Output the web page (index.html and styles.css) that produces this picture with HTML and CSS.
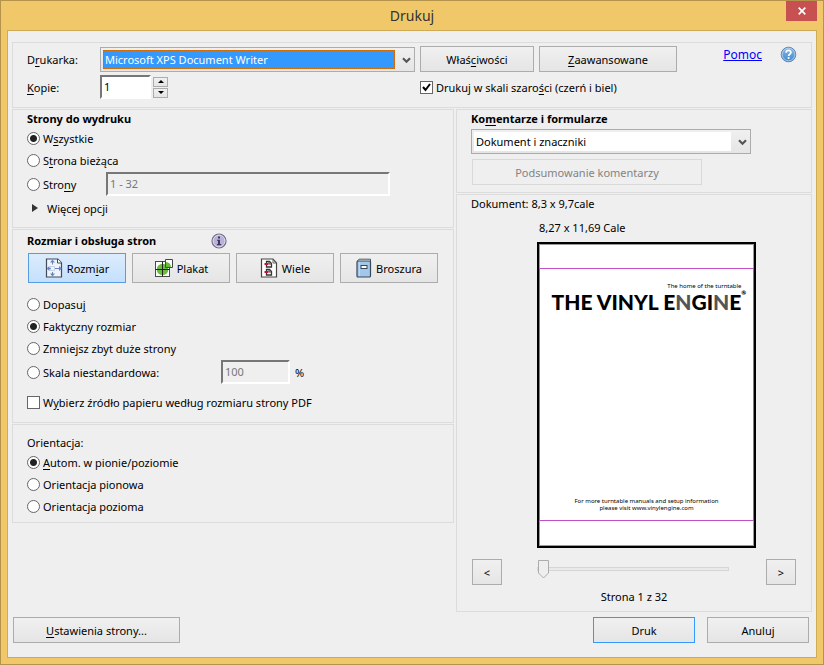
FILE: index.html
```html
<!DOCTYPE html>
<html lang="pl">

<head>
    <meta charset="UTF-8">
    <meta name="viewport" content="width=device-width, initial-scale=1.0">
    <title>Drukuj</title>
    <link rel="stylesheet" href="styles.css">
</head>

<body>
    <form class="window">
        <header class="titlebar">
            <h1>Drukuj</h1>
            <button type="button" class="close" aria-label="Zamknij">
                <svg width="8" height="8" viewBox="0 0 8 8"><path d="M.7.7l6.6 6.6M7.3.7L.7 7.3" stroke="#fff" stroke-width="1.7"/></svg>
            </button>
        </header>

        <main class="client">
            <section class="panel printer">
                <label for="printer">D<u>r</u>ukarka:</label>
                <div class="combo focused">
                    <select id="printer">
                        <option>Microsoft XPS Document Writer</option>
                    </select>
                    <svg class="arrow" width="9" height="7" viewBox="0 0 9 7"><path d="M1 1.3l3.5 3.4L8 1.3" fill="none" stroke="#555" stroke-width="2.2"/></svg>
                </div>
                <button type="button">Właś<u>c</u>iwości</button>
                <button type="button"><u>Z</u>aawansowane</button>
                <div class="help">
                    <a href="#">Pomoc</a>
                    <svg width="17" height="17" viewBox="0 0 17 17">
                        <defs>
                            <linearGradient id="helpFill" x1="0" y1="0" x2="0" y2="1">
                                <stop offset="0" stop-color="#8dbbe6"/>
                                <stop offset="1" stop-color="#3f86cb"/>
                            </linearGradient>
                        </defs>
                        <circle cx="8.5" cy="8.5" r="7.3" fill="url(#helpFill)" stroke="#5d86b0" stroke-width="1"/>
                        <circle cx="8.5" cy="8.5" r="6.3" fill="none" stroke="#b6d4f0" stroke-width=".8"/>
                        <path d="M6.2 6.7C6.2 3.7 10.9 3.8 10.9 6.5C10.9 8.1 8.6 8.2 8.6 10" fill="none" stroke="#fff" stroke-width="1.7"/>
                        <rect x="7.7" y="11.1" width="1.8" height="1.8" fill="#fff"/>
                    </svg>
                </div>

                <label for="copies"><u>K</u>opie:</label>
                <div class="copies">
                    <input type="text" id="copies" class="sunken" value="1">
                    <div class="spin">
                        <button type="button" aria-label="Więcej"><svg width="6" height="3" viewBox="0 0 6 3"><path d="M3 0l3 3H0z"/></svg></button>
                        <button type="button" aria-label="Mniej"><svg width="6" height="3" viewBox="0 0 6 3"><path d="M0 0h6L3 3z"/></svg></button>
                    </div>
                </div>
                <label class="option gray"><input type="checkbox" checked>Drukuj w skali szaro<u>ś</u>ci (czerń i biel)</label>
            </section>

            <div class="columns">
                <div class="column">
                    <section class="panel pages">
                        <h2>Strony do wydruku</h2>
                        <label class="option"><input type="radio" name="pages" checked><span>W<u>s</u>zystkie</span></label>
                        <label class="option"><input type="radio" name="pages"><span>S<u>t</u>rona bieżąca</span></label>
                        <div class="field-row">
                            <label class="option range-label"><input type="radio" name="pages"><span>Stro<u>n</u>y</span></label>
                            <input type="text" class="sunken range" value="1 - 32" aria-label="Zakres stron" disabled>
                        </div>
                        <button type="button" class="more">
                            <svg width="6" height="8" viewBox="0 0 6 8"><path d="M0 0l6 4-6 4z" fill="#333"/></svg>
                            Więcej opcji
                        </button>
                    </section>

                    <section class="panel sizing">
                        <div class="heading">
                            <h2>Rozmiar i obsługa stron</h2>
                            <svg width="16" height="16" viewBox="0 0 16 16">
                                <circle cx="8" cy="8" r="7" fill="#b9b0da" stroke="#6e6a7c" stroke-width="1.2"/>
                                <circle cx="8" cy="8" r="5.9" fill="none" stroke="#dcd7ee"/>
                                <path d="M7 3.6h2v1.8H7zM6 6.7h3v4.4h1.2v1.2H5.9v-1.2H7V7.8H6z" fill="#3f3a58"/>
                            </svg>
                        </div>
                        <div class="modes">
                            <button type="button" class="selected">
                                <svg width="18" height="20" viewBox="0 0 18 20">
                                    <path d="M1.5 1h11.3l3.7 3.7V19h-15z" fill="#eef4fc" stroke="#444b58" stroke-width="1.2"/>
                                    <path d="M12.5 1v4h4" fill="#fff" stroke="#444b58"/>
                                    <path d="M7.500 2.500v4M7.500 14v4M3 10.500h3M10 10.500h5" fill="none" stroke="#6a84bd"/>
                                    <path d="M5.500 8.500h4v4h-4z" fill="none" stroke="#9fb3d8" stroke-dasharray="1 1"/>
                                    <path d="M7.500 1.500l2.500 3H5zM7.500 18.500l2.500-3H5zM1.500 10.500l3-2.500v5zM17 10.500L14 8v5z" fill="#6a84bd"/>
                                </svg>
                                <span>Rozm<u>i</u>ar</span>
                            </button>
                            <button type="button">
                                <svg width="19" height="20" viewBox="0 0 19 20">
                                    <rect x="1.5" y="3.5" width="14" height="15" fill="#fff" stroke="#4a4a4a"/>
                                    <circle cx="8.5" cy="11.5" r="5.8" fill="#67bd3b"/>
                                    <path d="M8.5 3.5v15M1.500 11.500h14" stroke="#222"/>
                                    <path d="M11.500 1.500h7v8h-7z" fill="#fff" stroke="#444"/>
                                    <path d="M12 4a5.500 5.500 0 0 1 5 5h-5z" fill="#67bd3b"/>
                                </svg>
                                <span>Plakat</span>
                            </button>
                            <button type="button">
                                <svg width="18" height="20" viewBox="0 0 18 20">
                                    <path d="M1.5 1h11.5l3.5 4v14h-15z" fill="#fff" stroke="#444" stroke-width="1.2"/>
                                    <path d="M13 1v4h3.5" fill="none" stroke="#666"/>
                                    <path d="M6.500 3.500h3l2 2v3.500h-5zM6.500 11.500h3l2 2V17h-5z" fill="#fff" stroke="#333" stroke-width="1.3"/>
                                    <path d="M9 3.500v2.500h2.500M9 11.500V14h2.500" fill="none" stroke="#444"/>
                                    <path d="M4.500 5h4v2h-4zM4.500 13h4v2h-4z" fill="#c8102e"/>
                                </svg>
                                <span>Wiele</span>
                            </button>
                            <button type="button">
                                <svg width="16" height="20" viewBox="0 0 16 20">
                                    <path d="M1.5 3L3 1.200h11.500V18" fill="#fff" stroke="#48525e"/>
                                    <rect x="1" y="3" width="13.5" height="16" rx="1" fill="#a4c6e8" stroke="#35485b" stroke-width="1.2"/>
                                    <path d="M3.5 4v14" stroke="#bed8f0"/>
                                    <rect x="5" y="7.5" width="6" height="3" fill="#fff" stroke="#35485b"/>
                                </svg>
                                <span>Broszura</span>
                            </button>
                        </div>
                        <label class="option"><input type="radio" name="scale"><span>Dopasu<u>j</u></span></label>
                        <label class="option"><input type="radio" name="scale" checked>Faktyczny rozmiar</label>
                        <label class="option"><input type="radio" name="scale">Zmniejsz zbyt duże strony</label>
                        <div class="field-row">
                            <label class="option scale-label"><input type="radio" name="scale">Skala niestandardowa:</label>
                            <input type="text" class="sunken percent" value="100" aria-label="Skala" disabled>
                            <span>%</span>
                        </div>
                        <label class="option source"><input type="checkbox"><span>W<u>y</u>bierz źródło papieru według rozmiaru strony PDF</span></label>
                    </section>

                    <section class="panel orientation">
                        <h3>Orientacja:</h3>
                        <label class="option"><input type="radio" name="orientation" checked><span><u>A</u>utom. w pionie/poziomie</span></label>
                        <label class="option"><input type="radio" name="orientation">Orientacja pionowa</label>
                        <label class="option"><input type="radio" name="orientation">Orientacja pozioma</label>
                    </section>
                </div>

                <div class="column">
                    <section class="panel comments">
                        <h2><label for="comments">Ko<u>m</u>entarze i formularze</label></h2>
                        <div class="combo">
                            <select id="comments">
                                <option>Dokument i znaczniki</option>
                            </select>
                            <svg class="arrow" width="9" height="7" viewBox="0 0 9 7"><path d="M1 1.3l3.5 3.4L8 1.3" fill="none" stroke="#555" stroke-width="2.2"/></svg>
                        </div>
                        <button type="button" class="summary" disabled>Podsumowanie komentarzy</button>
                    </section>

                    <section class="panel preview">
                        <p>Dokument: 8,3 x 9,7cale</p>
                        <p class="paper-size">8,27 x 11,69 Cale</p>
                        <div class="paper">
                            <div class="page">
                                <div class="logo">
                                    <p class="tagline">The home of the turntable</p>
                                    <p class="brand">THE VINYL E<span>N</span>GI<span>N</span>E<sup>®</sup></p>
                                </div>
                                <p class="note">For more turntable manuals and setup information<br>please visit www.vinylengine.com</p>
                            </div>
                        </div>
                        <div class="pager">
                            <button type="button" aria-label="Poprzednia strona">&lt;</button>
                            <input type="range" min="1" max="32" value="1" aria-label="Strona">
                            <button type="button" aria-label="Następna strona">&gt;</button>
                        </div>
                        <p class="page-number">Strona 1 z 32</p>
                    </section>
                </div>
            </div>

            <footer class="actions">
                <button type="button" class="setup"><span><u>U</u>stawienia strony...</span></button>
                <button type="submit" class="default">Druk</button>
                <button type="button">Anuluj</button>
            </footer>
        </main>
    </form>
</body>

</html>
```

FILE: styles.css
```css
* {
    box-sizing: border-box;
}

body {
    margin: 0;
    font-family: "Noto Sans", sans-serif;
    font-size: 11px;
    line-height: 17px;
    color: #000;
}

h1, h2, h3, p {
    margin: 0;
    font-size: inherit;
    font-weight: normal;
}

h2 {
    font-weight: bold;
}

button, input, select {
    font: inherit;
    color: inherit;
}

svg {
    flex: none;
}

u {
    text-underline-offset: 2px;
}

.window {
    display: flex;
    flex-direction: column;
    min-height: 100vh;
    padding: 0 6px 6px;
    border: 1px solid #b5934a;
    background: #f0c869;
}

.titlebar {
    display: grid;
    grid-template-columns: 31px 1fr 31px;
    align-items: start;
    height: 29px;
}

.titlebar h1 {
    grid-column: 2;
    font-size: 14px;
    line-height: 29px;
    text-align: center;
    color: #333;
}

.titlebar .close {
    display: flex;
    align-items: center;
    justify-content: center;
    height: 20px;
    padding: 0;
    border: none;
    background: #c75050;
}

.client {
    flex: 1;
    padding: 11px 4px 13px;
    border: 1px solid #cfab58;
    background: #efefef;
}

.panel {
    border: 1px solid #dcdcdc;
    padding: 0 14px;
}

button {
    height: 26px;
    padding: 0 6px;
    border: 1px solid #acacac;
    background: linear-gradient(#f0f0f0, #e5e5e5);
}

button:disabled {
    border-color: #d9d9d9;
    background: #efefef;
    color: #838383;
}

/* drop-downs */
.combo {
    position: relative;
    height: 25px;
}

.combo select {
    appearance: none;
    width: 100%;
    height: 25px;
    padding: 2px 19px 2px 2px;
    border: 1px solid #acacac;
    border-radius: 0;
    background: linear-gradient(#fff, #fff) content-box, linear-gradient(#f0f0f0, #e5e5e5);
    text-indent: 2px;
}

.combo.focused select {
    background: linear-gradient(#3399ff, #3399ff) content-box, linear-gradient(#f0f0f0, #e5e5e5);
    color: #fff;
    outline: none;
}

.combo.focused::after {
    content: "";
    position: absolute;
    inset: 3px 20px 3px 3px;
    border: 1px dotted #cc6600;
    pointer-events: none;
}

.combo .arrow {
    position: absolute;
    top: 10px;
    right: 4px;
    pointer-events: none;
}

.sunken {
    height: 24px;
    padding: 0 2px 2px;
    border: 2px solid;
    border-color: #777 #fff #fff #777;
    background: #fff;
}

.sunken:disabled {
    background: #efefef;
    color: #777;
}

/* radios and tick boxes */
.option {
    display: flex;
    align-items: center;
    height: 22px;
    white-space: pre;
}

.option input {
    appearance: none;
    flex: none;
    width: 13px;
    height: 13px;
    margin: 0 3px 0 0;
    border: 1px solid #666;
    background: #fff;
}

.option input[type="radio"] {
    border-radius: 50%;
}

.option input[type="radio"]:checked {
    background: radial-gradient(circle, #222 3px, #fff 4px);
}

.option input[type="checkbox"]:checked {
    background: #fff url("data:image/svg+xml,%3Csvg xmlns='http://www.w3.org/2000/svg' viewBox='0 0 11 11'%3E%3Cpath d='M2 5l2.500 3L9 2' fill='none' stroke='%23000' stroke-width='2'/%3E%3C/svg%3E");
}

.field-row {
    display: flex;
    align-items: center;
    height: 26px;
}

/* printer */
.printer {
    display: grid;
    grid-template-columns: 68px 1fr 114px 138px 115px;
    column-gap: 5px;
    row-gap: 3px;
    align-items: center;
    padding-top: 3px;
    padding-bottom: 8px;
    margin-bottom: 1px;
}

.help {
    display: flex;
    justify-content: flex-end;
    align-self: start;
    gap: 18px;
}

.help a {
    font-size: 12px;
    color: #00f;
}

.copies {
    display: flex;
    align-items: center;
    gap: 2px;
}

.copies .sunken {
    width: 51px;
}

.spin {
    display: grid;
    gap: 1px;
}

.spin button {
    display: flex;
    align-items: center;
    justify-content: center;
    width: 15px;
    height: 10px;
    padding: 0;
}

.gray {
    grid-column: 3 / -1;
}

/* two columns of settings */
.columns {
    display: grid;
    grid-template-columns: 442fr 356fr;
    gap: 2px;
}

.column {
    display: flex;
    flex-direction: column;
    gap: 1px;
}

.pages {
    padding-bottom: 8px;
}

.range-label {
    width: 79px;
}

.range {
    flex: 1;
    margin-right: 49px;
}

.more {
    display: flex;
    align-items: center;
    gap: 9px;
    height: 22px;
    padding: 0 5px;
    border: none;
    background: none;
}

.sizing {
    padding-top: 2px;
    padding-bottom: 9px;
}

.heading {
    display: flex;
    align-items: center;
    justify-content: space-between;
    width: 200px;
    height: 17px;
    white-space: nowrap;
}

.modes {
    display: grid;
    grid-template-columns: repeat(4, 1fr);
    gap: 6px;
    margin: 4px 1px 10px;
}

.modes button {
    display: flex;
    align-items: center;
    justify-content: center;
    gap: 4px;
    height: 30px;
}

.modes .selected {
    border-color: #569de5;
    background: linear-gradient(#dcecfc, #c4e0fc);
}

.scale-label {
    width: 194px;
}

.percent {
    width: 69px;
    margin-right: 5px;
}

.source {
    margin-top: 6px;
}

.orientation {
    padding-top: 9px;
    padding-bottom: 5px;
}

.comments {
    padding-bottom: 7px;
}

.comments .combo {
    width: 280px;
    margin: 2px 0 5px;
}

.summary {
    display: block;
    width: 230px;
    margin-left: 1px;
}

/* preview */
.paper-size {
    margin: 7px 0 6px 68px;
}

.paper {
    width: 219px;
    height: 306px;
    margin-left: 66px;
    padding: 24px 0 25px;
    border: 2px solid #000;
    background: #fff;
    box-shadow: inset 0 0 0 1px #999;
}

.page {
    display: flex;
    flex-direction: column;
    align-items: center;
    justify-content: space-between;
    height: 100%;
    padding: 14px 0 8px;
    border: 1px solid #c050c8;
}

.logo {
    width: 190px;
}

.tagline {
    font-size: 6px;
    line-height: 7px;
    text-align: right;
}

.brand {
    font-family: "Lato", sans-serif;
    font-size: 21px;
    font-weight: 900;
    line-height: 24px;
    white-space: nowrap;
}

.brand span {
    color: #555;
}

.brand sup {
    font-size: 6px;
    line-height: 6px;
    vertical-align: top;
}

.note {
    font-size: 6px;
    line-height: 7px;
    text-align: center;
}

.pager {
    display: flex;
    margin: 11px 1px 0;
}

.pager button {
    width: 30px;
    padding: 0;
}

.pager input {
    appearance: none;
    flex: 1;
    min-width: 0;
    height: 20px;
    margin: 0 37px 0 35px;
    background: none;
}

.pager input::-webkit-slider-runnable-track {
    height: 4px;
    border: 1px solid #d6d6d6;
    background: #e7eaea;
}

.pager input::-webkit-slider-thumb {
    appearance: none;
    width: 11px;
    height: 19px;
    margin-top: -8px;
    background: url("data:image/svg+xml,%3Csvg xmlns='http://www.w3.org/2000/svg' viewBox='0 0 11 19'%3E%3Cpath d='M.5.5h10V13l-5 5-5-5z' fill='%23eee' stroke='%23acacac'/%3E%3C/svg%3E");
}

.page-number {
    margin: 3px 0 6px;
    text-align: center;
}

.actions {
    display: flex;
    gap: 12px;
    padding: 5px 3px 0 1px;
}

.actions button {
    width: 102px;
}

.actions .setup {
    width: 167px;
    margin-right: auto;
}

.actions .default {
    border-color: #3399ff;
}
```
